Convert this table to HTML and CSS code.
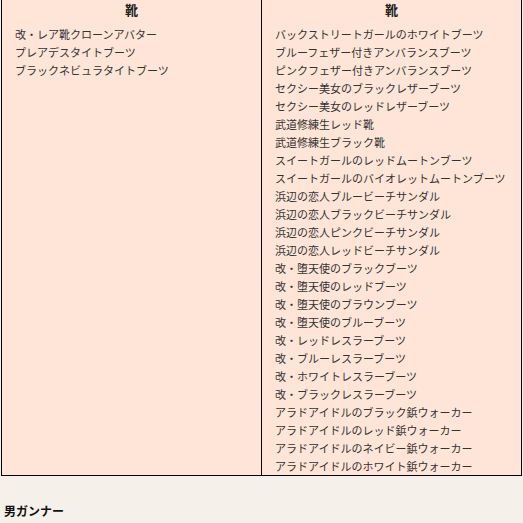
FILE: index.html
```html
<!DOCTYPE html>
<html lang="ja">
<head>
    <meta charset="UTF-8">
    <title>靴</title>
    <link rel="stylesheet" href="styles.css">
</head>
<body>
    <div class="page">
        <table class="item-table">
            <tr>
                <th>靴</th>
                <th>靴</th>
            </tr>
            <tr>
                <td>
                    <ul class="item-list">
                        <li>改・レア靴クローンアバター</li>
                        <li>プレアデスタイトブーツ</li>
                        <li>ブラックネビュラタイトブーツ</li>
                    </ul>
                </td>
                <td>
                    <ul class="item-list">
                        <li>バックストリートガールのホワイトブーツ</li>
                        <li>ブルーフェザー付きアンバランスブーツ</li>
                        <li>ピンクフェザー付きアンバランスブーツ</li>
                        <li>セクシー美女のブラックレザーブーツ</li>
                        <li>セクシー美女のレッドレザーブーツ</li>
                        <li>武道修練生レッド靴</li>
                        <li>武道修練生ブラック靴</li>
                        <li>スイートガールのレッドムートンブーツ</li>
                        <li>スイートガールのバイオレットムートンブーツ</li>
                        <li>浜辺の恋人ブルービーチサンダル</li>
                        <li>浜辺の恋人ブラックビーチサンダル</li>
                        <li>浜辺の恋人ピンクビーチサンダル</li>
                        <li>浜辺の恋人レッドビーチサンダル</li>
                        <li>改・堕天使のブラックブーツ</li>
                        <li>改・堕天使のレッドブーツ</li>
                        <li>改・堕天使のブラウンブーツ</li>
                        <li>改・堕天使のブルーブーツ</li>
                        <li>改・レッドレスラーブーツ</li>
                        <li>改・ブルーレスラーブーツ</li>
                        <li>改・ホワイトレスラーブーツ</li>
                        <li>改・ブラックレスラーブーツ</li>
                        <li>アラドアイドルのブラック鋲ウォーカー</li>
                        <li>アラドアイドルのレッド鋲ウォーカー</li>
                        <li>アラドアイドルのネイビー鋲ウォーカー</li>
                        <li>アラドアイドルのホワイト鋲ウォーカー</li>
                    </ul>
                </td>
            </tr>
        </table>

        <h4 class="section-title">男ガンナー</h4>
    </div>
</body>
</html>
```

FILE: styles.css
```css
* {
    box-sizing: border-box;
    margin: 0;
    padding: 0;
}
body {
    font-family: "Noto Sans CJK JP", "Noto Sans", sans-serif;
    background: #f5f1ea;
    color: #333;
    font-size: 11px;
    line-height: 18px;
}
.page {
    /* scrolled a little, the table top is off screen */
    margin-top: -4px;
    padding-left: 1px;
}
.item-table {
    width: 521px;
    border-collapse: collapse;
    table-layout: fixed;
    border: 1px solid #000;
    background: #fee5d8;
}
.item-table th,
.item-table td {
    border-left: 1px solid #000;
    border-right: 1px solid #000;
    vertical-align: top;
}
.item-table th {
    font-size: 13px;
    font-weight: bold;
    padding: 4px 0;
    text-align: center;
    color: #222;
}
.item-table td {
    padding: 2px 13px 0;
}
.item-list {
    list-style: none;
}
.section-title {
    font-size: 12px;
    font-weight: bold;
    color: #111;
    margin-top: 26px;
    padding-left: 3px;
}
```
